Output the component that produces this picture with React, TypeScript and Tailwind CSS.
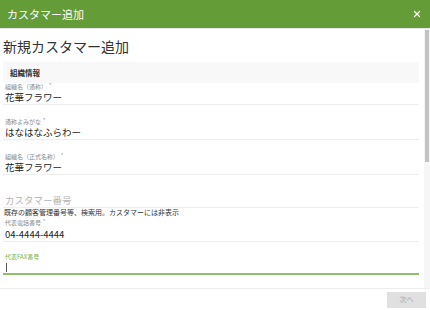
import React from "react";
import { X } from "lucide-react";

function Label({ text, req, green }: { text: string; req?: boolean; green?: boolean }) {
  return (
    <div className={`h-[8px] leading-[8px] text-[6px] ${green ? "text-[#7cb342]" : "text-[#8a8a8a]"} pl-[2px]`}>
      {text}
      {req && <span className="relative top-[-2px] ml-[2px] text-[5px]">*</span>}
    </div>
  );
}

function Field({ label, value, req, pt }: { label: string; value: string; req?: boolean; pt: string }) {
  return (
    <div className={`${pt} border-b border-[#eeeeee]`}>
      <Label text={label} req={req} />
      <div className="h-[13px] leading-[13px] text-[9.5px] text-[#222] pl-[2px]">{value}</div>
    </div>
  );
}

export default function App() {
  return (
    <div className="w-[430px] h-[310px] flex flex-col bg-white font-['Noto_Sans_CJK_JP',sans-serif] overflow-hidden">
      <div className="h-[28px] shrink-0 bg-[#649c38] flex items-center justify-between pl-[7px] pr-[8px] text-white">
        <span className="text-[11px]">カスタマー追加</span>
        <X size={10} strokeWidth={3} />
      </div>
      <div className="h-px shrink-0 bg-[#e6e6e6]" />
      <div className="flex-1 min-h-0 flex">
        <div className="flex-1 min-w-0 overflow-hidden pl-[3px] pr-[5px]">
          <div className="pt-[7px] h-[27px] leading-[20px] text-[14px] text-[#333]">新規カスタマー追加</div>
          <div className="mt-[6px] h-[21px] bg-[#f8f8f8] flex items-center pl-[7px] text-[7.5px] font-bold text-[#333]">組織情報</div>
          <Field pt="pt-0" label="組織名（通称）" value="花華フラワー" req />
          <Field pt="pt-[13px]" label="通称よみがな" value="はなはなふらわー" req />
          <Field pt="pt-[13px]" label="組織名（正式名称）" value="花華フラワー" req />
          <div className="pt-[19px] border-b border-[#eeeeee]">
            <div className="h-[13px] leading-[13px] text-[9.5px] text-[#b5b5b5] pl-[2px]">カスタマー番号</div>
          </div>
          <div className="h-[8px] leading-[8px] text-[7px] text-[#333] pl-[1px]">既存の顧客管理番号等、検索用。カスタマーには非表示</div>
          <div className="pt-[3px] border-b border-[#eeeeee]">
            <Label text="代表電話番号" req />
            <div className="h-[14px] leading-[14px] text-[9.5px] text-[#222] pl-[2px]">04-4444-4444</div>
          </div>
          <div className="pt-[11px] border-b-2 border-[#8cc06a]">
            <Label text="代表FAX番号" green />
            <div className="h-[12px] flex items-center pl-[3px]">
              <div className="w-px h-[9px] bg-[#555]" />
            </div>
          </div>
        </div>
        <div className="w-[6px] shrink-0 bg-[#f6f6f6] px-px pt-px">
          <div className="h-[132px] bg-[#c2c2c2]" />
        </div>
      </div>
      <div className="h-[22px] shrink-0 border-t border-[#ececec] flex items-center justify-end pr-[4px]">
        <div className="w-[39px] h-[16px] bg-[#e0e0e0] flex items-center justify-center text-[7px] text-[#a8a8a8]">次へ</div>
      </div>
    </div>
  );
}
